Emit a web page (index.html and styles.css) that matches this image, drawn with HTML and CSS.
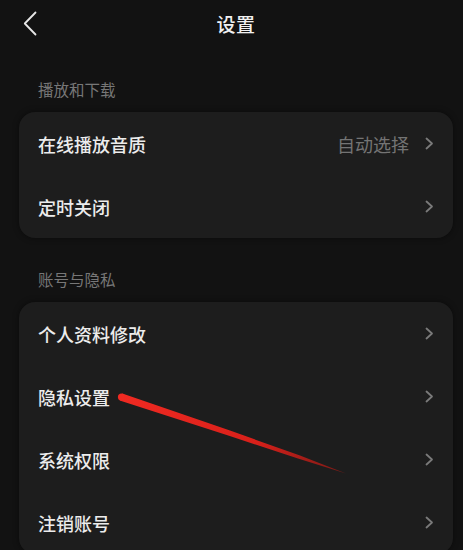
FILE: index.html
```html
<!DOCTYPE html>
<html lang="zh-CN">
<head>
<meta charset="utf-8">
<title>设置</title>
<link rel="stylesheet" href="styles.css">
</head>
<body>
<div class="page">
  <header class="topbar">
    <svg class="back" width="14" height="25" viewBox="0 0 14 25" aria-hidden="true">
      <path d="M12.5 1.5 L1.8 12.5 L12.5 23.5" fill="none" stroke="#e6e6e6" stroke-width="1.8" stroke-linecap="round" stroke-linejoin="round"/>
    </svg>
    <h1 class="title">设置</h1>
  </header>

  <section class="section">
    <div class="section-title">播放和下载</div>
    <div class="card">
      <div class="row">
        <span class="label">在线播放音质</span>
        <span class="value">自动选择</span>
        <svg class="chev" width="9" height="13" viewBox="0 0 9 13" aria-hidden="true"><path d="M1.5 1.5 L7 6.5 L1.5 11.5" fill="none" stroke="#7a7a7a" stroke-width="1.8" stroke-linecap="round" stroke-linejoin="round"/></svg>
      </div>
      <div class="row">
        <span class="label">定时关闭</span>
        <svg class="chev" width="9" height="13" viewBox="0 0 9 13" aria-hidden="true"><path d="M1.5 1.5 L7 6.5 L1.5 11.5" fill="none" stroke="#7a7a7a" stroke-width="1.8" stroke-linecap="round" stroke-linejoin="round"/></svg>
      </div>
    </div>
  </section>

  <section class="section">
    <div class="section-title">账号与隐私</div>
    <div class="card">
      <div class="row">
        <span class="label">个人资料修改</span>
        <svg class="chev" width="9" height="13" viewBox="0 0 9 13" aria-hidden="true"><path d="M1.5 1.5 L7 6.5 L1.5 11.5" fill="none" stroke="#7a7a7a" stroke-width="1.8" stroke-linecap="round" stroke-linejoin="round"/></svg>
      </div>
      <div class="row">
        <span class="label">隐私设置</span>
        <svg class="chev" width="9" height="13" viewBox="0 0 9 13" aria-hidden="true"><path d="M1.5 1.5 L7 6.5 L1.5 11.5" fill="none" stroke="#7a7a7a" stroke-width="1.8" stroke-linecap="round" stroke-linejoin="round"/></svg>
      </div>
      <div class="row">
        <span class="label">系统权限</span>
        <svg class="chev" width="9" height="13" viewBox="0 0 9 13" aria-hidden="true"><path d="M1.5 1.5 L7 6.5 L1.5 11.5" fill="none" stroke="#7a7a7a" stroke-width="1.8" stroke-linecap="round" stroke-linejoin="round"/></svg>
      </div>
      <div class="row">
        <span class="label">注销账号</span>
        <svg class="chev" width="9" height="13" viewBox="0 0 9 13" aria-hidden="true"><path d="M1.5 1.5 L7 6.5 L1.5 11.5" fill="none" stroke="#7a7a7a" stroke-width="1.8" stroke-linecap="round" stroke-linejoin="round"/></svg>
      </div>
    </div>
  </section>

  <svg class="annotation" width="463" height="550" viewBox="0 0 463 550" aria-hidden="true">
    <defs>
      <linearGradient id="red" x1="121" y1="397" x2="345" y2="473" gradientUnits="userSpaceOnUse">
        <stop offset="0" stop-color="#f02a22"/>
        <stop offset="0.6" stop-color="#d8201a"/>
        <stop offset="1" stop-color="#7a1a16"/>
      </linearGradient>
    </defs>
    <polygon points="122.3,393.6 230,430.6 300,455.5 346,473.5 298,458.5 229,435.8 119.7,400.6" fill="url(#red)"/>
    <circle cx="121.5" cy="397" r="3.6" fill="#f02a22"/>
  </svg>
</div>
</body>
</html>
```

FILE: styles.css
```css
* {
  box-sizing: border-box;
}

html, body {
  margin: 0;
  padding: 0;
  background: #121212;
}

body {
  font-family: "Noto Sans CJK SC", "Noto Sans", sans-serif;
  color: #ececec;
}

.page {
  position: relative;
  width: 463px;
  height: 550px;
  overflow: hidden;
  background: #121212;
}

.topbar {
  position: relative;
  height: 48px;
  display: flex;
  align-items: center;
  justify-content: center;
  padding-left: 9px;
}

.back {
  position: absolute;
  left: 23px;
  top: 11px;
}

.title {
  margin: 0;
  font-size: 19px;
  font-weight: 500;
  line-height: 26px;
  color: #f0f0f0;
  letter-spacing: 0.5px;
}

.section {
  padding-top: 30px;
}

.section-title {
  padding-left: 38px;
  font-size: 15.5px;
  line-height: 22px;
  color: #777777;
  margin-bottom: 12px;
}

.card {
  margin: 0 10px 0 19px;
  background: #1d1d1d;
  border-radius: 16px;
  box-shadow: 0 0 6px rgba(0, 0, 0, 0.45);
}

.row {
  height: 63px;
  display: flex;
  align-items: center;
  padding: 0 19px 0 19px;
}

.label {
  flex: 1;
  font-size: 18px;
  font-weight: 500;
  line-height: 24px;
  color: #ececec;
}

.value {
  font-size: 18px;
  line-height: 24px;
  color: #747474;
  margin-right: 16px;
}

.chev {
  display: block;
  flex: none;
}

.annotation {
  position: absolute;
  left: 0;
  top: 0;
  pointer-events: none;
}
```
